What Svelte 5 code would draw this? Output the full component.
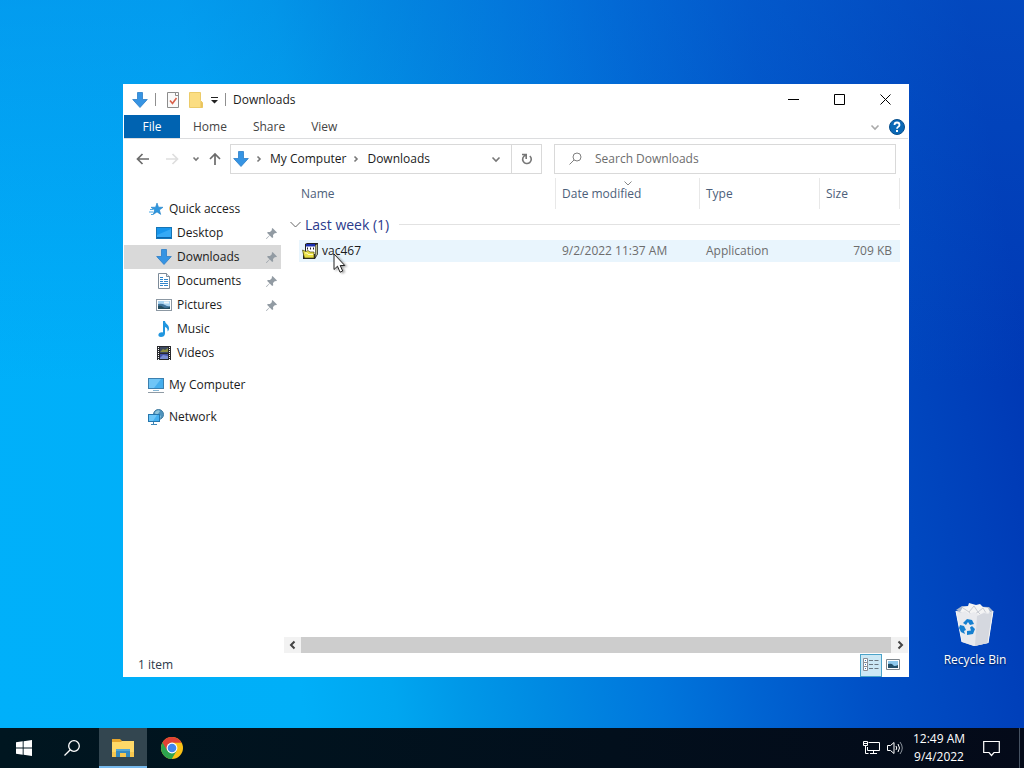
<script lang="ts">
  type NavItem = { name: string; icon: string; child?: boolean; pinned?: boolean; gap?: boolean };

  const places: NavItem[] = [
    { name: 'Quick access', icon: 'star' },
    { name: 'Desktop', icon: 'desktop', child: true, pinned: true },
    { name: 'Downloads', icon: 'arrow', child: true, pinned: true },
    { name: 'Documents', icon: 'document', child: true, pinned: true },
    { name: 'Pictures', icon: 'picture', child: true, pinned: true },
    { name: 'Music', icon: 'music', child: true },
    { name: 'Videos', icon: 'video', child: true },
    { name: 'My Computer', icon: 'computer', gap: true },
    { name: 'Network', icon: 'network', gap: true },
  ];

  const files = [
    { name: 'vac467', modified: '9/2/2022 11:37 AM', type: 'Application', size: '709 KB' },
  ];

  let current = $state('Downloads');
  let view = $state('details');
  let query = $state('');
</script>

{#snippet icon(name: string)}
  <svg class="icon" width="16" height="16" viewBox="0 0 16 16" aria-hidden="true">
    {#if name === 'arrow'}
      <path d="M5.500.5h5v7h4.800L8 15.500.7 7.500h4.800z" fill="#3694e3" stroke="#2b7ec8" stroke-width=".8" />
    {:else if name === 'star'}
      <path d="M9 2l1.500 4.200 4.500.1-3.600 2.700 1.300 4.400L9 10.900l-3.800 2.600 1.400-4.400L3 6.300l4.600-.1z" fill="#2f97df" stroke="#1f7fc6" stroke-width=".6" />
      <path d="M2 8.500h3M1 11h4M3 13.500h2" stroke="#4aa9e6" />
    {:else if name === 'desktop'}
      <rect x=".5" y="2.500" width="15" height="11" fill="#1795ec" stroke="#1675b5" />
      <path d="M1 10L15 4v9H1z" fill="#35a9f5" />
      <path d="M1 12.500h14" stroke="#0b65ae" />
    {:else if name === 'document'}
      <path d="M2.500.5h8l3 3v12h-11z" fill="#fff" stroke="#7d8b99" />
      <path d="M10.500.5v3h3" fill="#e3e8ed" stroke="#7d8b99" />
      <path d="M4 4.500h3M4 6.500h3M8 6.500h4M4 8.500h3M8 8.500h4M4 10.500h8M4 12.500h3M8 12.500h4" stroke="#2f86cc" stroke-width="1.200" />
    {:else if name === 'picture'}
      <rect x=".5" y="2.500" width="15" height="11" fill="#fff" stroke="#8c98a3" />
      <path d="M2 4h12v8H2z" fill="#a9d3f0" />
      <path d="M2 7q4-1 7 1t5 1v3H2z" fill="#41759c" />
      <path d="M2 9q3-1 5 1t7 0v2H2z" fill="#244d5f" />
      <path d="M8 5.500h5" stroke="#eef6fb" stroke-width="2" />
    {:else if name === 'music'}
      <path d="M7 0h2c.2 3 4.500 3.500 4 8-.1 1.200-.8 2-1.500 2.500C12.200 8 10.500 6.500 9 6v6.500C9 15 7 16 5 16s-3-1.300-2.500-2.700C3 11.800 5 11 7 11.500z" fill="#2196df" />
    {:else if name === 'video'}
      <path d="M1 1h14v14H1z" fill="#28292d" />
      <path d="M4 2h8v6H4z" fill="#3d4960" />
      <path d="M4 9h8v5H4z" fill="#4351a7" />
      <path d="M4 7l3-3 2 1 3-2v4z" fill="#8b8e3f" />
      <path d="M4 13l3-3 5 1v3H4z" fill="#7a8ed2" />
      <path d="M2.500 2v13M13.500 2v13" stroke="#fff" stroke-dasharray="1 1" />
    {:else if name === 'computer'}
      <rect x=".5" y="1.500" width="15" height="10" fill="#45aeed" stroke="#3c7fae" />
      <path d="M1 2h12L6 11H1z" fill="#6fc5f6" />
      <path d="M5 13.500h6" stroke="#85b7d5" />
      <path d="M0 15.500h16" stroke="#8f9ba5" />
    {:else if name === 'network'}
      <circle cx="10.500" cy="5.500" r="5" fill="#4f93bd" stroke="#417b9f" />
      <path d="M7 3q3-3 5-1l-2 3 3 2-1 3-4-2z" fill="#8fc4da" />
      <rect x=".5" y="5.500" width="11" height="7" fill="#45b0f0" stroke="#2676ad" />
      <path d="M1 6h8l-4 6H1z" fill="#6cc6f8" />
      <path d="M5.500 13v2M3 15.500h6" stroke="#3e86b6" />
    {:else if name === 'check'}
      <path d="M2.500.5h11v15h-11z" fill="#fafafa" stroke="#8c8c8c" />
      <path d="M10.500.5v3h3" fill="#fff" stroke="#8c8c8c" />
      <path d="M5 8.500l2.500 3L11.500 6" fill="none" stroke="#d9614b" stroke-width="1.600" />
    {:else if name === 'folder'}
      <path d="M1.500.5h11v8l2 2v5h-13z" fill="#fbdd82" stroke="#eccb69" />
      <path d="M12.500 9l2 2v4.500h-2z" fill="#eac45d" />
    {:else if name === 'installer'}
      <path d="M3 1l2-1h11v11l-3 5H1V9h2z" fill="#222" />
      <path d="M4 2h9v9H4z" fill="#fff" />
      <path d="M4 1h9v2.500H4z" fill="#1a2fb0" />
      <path d="M5 5.500h1M8 5.500h1M11 5.500h1" stroke="#222" stroke-width="2" />
      <path d="M13.500 2.500L15.300 1v10l-1.800 3z" fill="#b8bb8a" />
      <path d="M.5 7l3.500 1.500 2-1 2 1.500h4v6H2.500l-1-3.500z" fill="#e9df45" stroke="#4b4814" stroke-width=".7" />
      <path d="M3 10h2l1 1.500h5" fill="none" stroke="#fffbc0" />
    {/if}
  </svg>
{/snippet}

{#snippet chevron(direction: string)}
  <svg class="chevron {direction}" width="10" height="10" viewBox="0 0 10 10" aria-hidden="true">
    <path d="M1.500 3.500L5 7 8.500 3.500" />
  </svg>
{/snippet}

<div class="screen">
  <main class="desktop">
    <section class="window" aria-label="Downloads">
      <header class="titlebar">
        {@render icon('arrow')}
        <span class="separator"></span>
        <div class="quick-tools">
          <button class="plain" aria-label="Properties">{@render icon('check')}</button>
          <button class="plain" aria-label="New folder">{@render icon('folder')}</button>
          <button class="plain" aria-label="Customize toolbar">
            <svg width="7" height="8" viewBox="0 0 7 8"><path d="M0 1h7v1H0zM0 4h7L3.500 7.500z" fill="#222" /></svg>
          </button>
        </div>
        <span class="separator"></span>
        <h1>Downloads</h1>
        <div class="caption">
          <button aria-label="Minimize">
            <svg width="11" height="11" viewBox="0 0 11 11"><path d="M0 5.500h11" /></svg>
          </button>
          <button aria-label="Maximize">
            <svg width="11" height="11" viewBox="0 0 11 11"><path d="M.5.5h10v10H.5z" /></svg>
          </button>
          <button aria-label="Close">
            <svg width="11" height="11" viewBox="0 0 11 11"><path d="M.5.5l10 10M10.500.5l-10 10" /></svg>
          </button>
        </div>
      </header>

      <div class="ribbon">
        <button class="file">File</button>
        <button>Home</button>
        <button>Share</button>
        <button>View</button>
        <div class="ribbon-end">
          <button class="plain light" aria-label="Expand the ribbon">{@render chevron('down')}</button>
          <button class="plain" aria-label="Help">
            <svg width="16" height="16" viewBox="0 0 16 16">
              <circle cx="8" cy="8" r="7.500" fill="#0b69b7" stroke="#084f8c" />
              <path d="M5.500 6q0-2.500 2.500-2.500T10.500 6q0 1-1.200 1.700T8 9.800" fill="none" stroke="#fff" stroke-width="1.800" />
              <path d="M7 11h2v2H7z" fill="#fff" />
            </svg>
          </button>
        </div>
      </div>

      <div class="toolbar">
        <div class="history">
          <button class="plain" aria-label="Back">
            <svg class="nav-arrow" width="14" height="14" viewBox="0 0 14 14"><path d="M13 7H2M6.500 2L1.500 7l5 5" /></svg>
          </button>
          <button class="plain" aria-label="Forward" disabled>
            <svg class="nav-arrow faint" width="14" height="14" viewBox="0 0 14 14"><path d="M1 7h11M7.500 2l5 5-5 5" /></svg>
          </button>
          <button class="plain recent" aria-label="Recent locations">
            <svg class="chevron" width="8" height="8" viewBox="0 0 8 8"><path d="M1.500 2.500L4 5l2.500-2.500" /></svg>
          </button>
          <button class="plain" aria-label="Up">
            <svg class="nav-arrow" width="14" height="14" viewBox="0 0 14 14"><path d="M7 13V2M2 7l5-5 5 5" /></svg>
          </button>
        </div>
        <div class="address">
          {@render icon('arrow')}
          <svg class="step" width="8" height="8" viewBox="0 0 8 8" aria-hidden="true"><path d="M2.500 1.500L5 4 2.500 6.500" /></svg>
          <button class="crumb">My Computer</button>
          <svg class="step" width="8" height="8" viewBox="0 0 8 8" aria-hidden="true"><path d="M2.500 1.500L5 4 2.500 6.500" /></svg>
          <button class="crumb">Downloads</button>
          <button class="plain previous" aria-label="Previous locations">{@render chevron('down')}</button>
          <button class="refresh" aria-label="Refresh">
            <svg width="12" height="12" viewBox="0 0 12 12">
              <path d="M1 1.500h4.200V6M4.500 2.200A4.300 4.300 0 1 0 8.800 3" fill="none" stroke="#777" stroke-width="1.600" />
            </svg>
          </button>
        </div>
        <label class="search">
          <svg width="13" height="13" viewBox="0 0 13 13" aria-hidden="true">
            <circle cx="8" cy="5" r="4" /><path d="M5 8L.5 12.500" />
          </svg>
          <input type="text" aria-label="Search Downloads" placeholder="Search Downloads" bind:value={query} />
        </label>
      </div>

      <div class="body">
        <nav class="places" aria-label="Places">
          {#each places as place}
            <button
              class="place"
              class:child={place.child}
              class:gap={place.gap}
              class:selected={current === place.name}
              onclick={() => (current = place.name)}
            >
              {@render icon(place.icon)}
              <span>{place.name}</span>
              {#if place.pinned}
                <svg class="pin" width="11" height="11" viewBox="0 0 11 11" aria-hidden="true">
                  <path d="M6.500 0L11 4.500l-1 .8-1-.3-2 2 .2 2.200-1 .8-2.500-2.500L.8 10.700 0 11l.3-.8 3.200-2.900L1 4.800 2 4l2 .1 2-2-.3-1.200z" fill="#929ba3" />
                </svg>
              {/if}
            </button>
          {/each}
        </nav>

        <div class="content">
          <table>
            <thead>
              <tr>
                <th class="name">Name</th>
                <th class="modified">Date modified <span class="sort">{@render chevron('down')}</span></th>
                <th class="type">Type</th>
                <th class="size">Size</th>
              </tr>
            </thead>
            <tbody>
              <tr>
                <td class="group" colspan="4">
                  <div class="group-title">
                    <svg width="11" height="11" viewBox="0 0 11 11" aria-hidden="true"><path d="M.5 3l5 5 5-5" /></svg>
                    <span>Last week (1)</span>
                  </div>
                </td>
              </tr>
              {#each files as file}
                <tr class="file-row">
                  <td class="name"><div>{@render icon('installer')}<span>{file.name}</span></div></td>
                  <td>{file.modified}</td>
                  <td>{file.type}</td>
                  <td class="amount">{file.size}</td>
                </tr>
              {/each}
            </tbody>
          </table>
          <div class="scrollbar">
            <button aria-label="Scroll left">{@render chevron('left')}</button>
            <div class="thumb"></div>
            <button aria-label="Scroll right">{@render chevron('right')}</button>
          </div>
        </div>
      </div>

      <footer class="status">
        <span>{files.length} item</span>
        <div class="views">
          <button class:active={view === 'details'} aria-label="Details" onclick={() => (view = 'details')}>
            <svg width="16" height="14" viewBox="0 0 16 14">
              <path d="M.5.5h4v4h-4zM.5 4.500h4v4h-4zM.5 8.500h4v4h-4z" fill="#fff" stroke="#8b8d94" />
              <path d="M2 2.500h1M2 6.500h1M2 10.500h1" stroke="#3b79b4" />
              <path d="M6 2.500h4M11.500 2.500h4M6 6.500h4M11.500 6.500h4M6 10.500h4M11.500 10.500h4" stroke="#6b7780" />
            </svg>
          </button>
          <button class:active={view === 'large'} aria-label="Large icons" onclick={() => (view = 'large')}>
            <svg width="14" height="12" viewBox="0 0 14 12">
              <path d="M.5.5h13v10H.5z" fill="#fff" stroke="#7e868d" />
              <path d="M2 2h10v7H2z" fill="#8ec8ec" />
              <path d="M2 5q4-1 5 1t5 0v3H2z" fill="#244f68" />
            </svg>
          </button>
        </div>
      </footer>
    </section>

    <button class="shortcut">
      <svg width="40" height="44" viewBox="0 0 40 44" aria-hidden="true">
        <path d="M1 8l37 1-5 31-14 3-12-4z" fill="#cfd5df" />
        <path d="M1 7l6-4 27 1 4 4-5 4-15 2z" fill="#aab7cc" />
        <path d="M5 9l3-5 5-1 1-3 7 2 4-1 3 3 5 1 2 4-5 4-12 1z" fill="#f4f4f4" />
        <path d="M8 5l6 4 5-6 4 6 5-4 3 5M14 9l3 4 6-4 4 4" fill="none" stroke="#c8cbd2" />
        <path d="M1 8l5 2 4-2 4 3 5-2 5 3 5-3 4 1 5-2-5 32-14 3-12-4z" fill="#e9eaee" />
        <path d="M22 13l7-3 4 1 5-3-5 32-13 3z" fill="#d5d8df" />
        <path d="M1 8l6 31M38 8l-5 32" fill="none" stroke="#f8f8f8" />
        <g fill="#1680d0">
          <path d="M8 20l4-4 5 1 2 4-4 1-2-3-2 3z" />
          <path d="M5 22l4 1 2 4-2 1 1 3-4-2-2-4z" />
          <path d="M17 23l3 3-2 5-6 1v-4l4-.5-1-3z" />
        </g>
      </svg>
      <span>Recycle Bin</span>
    </button>

    <svg class="pointer" width="14" height="21" viewBox="0 0 14 21" aria-hidden="true">
      <path d="M1 1v15.500l3.500-3.300 2.500 6 2.700-1.200-2.500-5.500h4.600z" fill="#fff" stroke="#222" />
    </svg>
  </main>

  <footer class="taskbar">
    <div class="apps">
      <button aria-label="Start">
        <svg width="16" height="16" viewBox="0 0 16 16"><path d="M0 2.200L6.700 1.300V7.600H0zM7.600 1.200L16 0v7.600H7.600zM0 8.500h6.700v6.200L0 13.800zM7.600 8.500H16V16l-8.400-1.200z" fill="#fff" /></svg>
      </button>
      <button aria-label="Search">
        <svg width="16" height="16" viewBox="0 0 16 16" fill="none" stroke="#fff" stroke-width="1.300"><circle cx="10" cy="6" r="5.300" /><path d="M6.300 9.800L.5 15.500" /></svg>
      </button>
    </div>
    <div class="apps running">
      <button class="active" aria-label="File Explorer">
        <svg width="22" height="20" viewBox="0 0 22 20">
          <path d="M0 1h8l2 2h11v16H0z" fill="#e6a52c" />
          <path d="M0 4h9l1-1h12v16H0z" fill="#ffd968" />
          <path d="M0 14h22v5H0z" fill="#f8c84f" />
          <path d="M4 11h14v8h-4v-4H8v4H4z" fill="#368bc1" />
          <path d="M4 11h14v2H4z" fill="#55a7d4" />
        </svg>
      </button>
      <button aria-label="Google Chrome">
        <svg width="22" height="22" viewBox="0 0 22 22">
          <circle cx="11" cy="11" r="11" fill="#fbc116" />
          <path d="M11 11L1.500 5.500A11 11 0 0 0 10.800 22L15.800 13.500z" fill="#2da44f" />
          <path d="M1.500 5.500A11 11 0 0 1 20.600 5.800H11L6.300 13.700z" fill="#e14135" />
          <circle cx="11" cy="11" r="5.400" fill="#fff" />
          <circle cx="11" cy="11" r="4.300" fill="#4285ed" />
        </svg>
      </button>
    </div>
    <div class="tray">
      <button aria-label="Network status">
        <svg width="17" height="14" viewBox="0 0 17 14" fill="none" stroke="#fff"><path d="M5.500 1.500h11v8h-12V6M.5.5h4v4h-4zM2.500 4.500v8h3M10.500 9.500v3M7 12.500h7M1 2.500h3" /></svg>
      </button>
      <button aria-label="Volume">
        <svg width="17" height="14" viewBox="0 0 17 14" fill="none" stroke="#fff"><path d="M.5 4.500h3l3.500-3v11l-3.500-3h-3zM9 5q1.500 2 0 4M11 3q3 4 0 8" /><path d="M13 1q4.500 6 0 12" stroke="#8a929b" /></svg>
      </button>
      <button class="clock"><span>12:49 AM</span><span>9/4/2022</span></button>
      <button class="notify" aria-label="Notifications">
        <svg width="17" height="17" viewBox="0 0 17 17" fill="none" stroke="#fff" stroke-width="1.200"><path d="M.7 1.500h15.600v11H11l-2.500 3-2.500-3H.7z" /></svg>
      </button>
      <button class="peek" aria-label="Show desktop"></button>
    </div>
  </footer>
</div>

<style>
  :global(body) {
    margin: 0;
  }

  .screen {
    display: flex;
    flex-direction: column;
    min-height: 100vh;
    font-family: "Open Sans", "Noto Sans", sans-serif;
    font-size: 12px;
    line-height: 16px;
    color: #1b1b1b;
    background:
      linear-gradient(180deg, rgba(10, 110, 215, 0.3), rgba(0, 140, 230, 0) 50%),
      linear-gradient(80deg, #00b0fa 0%, #00aff8 27%, #00a6f0 35%, #0098e8 41%, #008ae2 48%, #0076dc 58%, #0064d2 66%, #0050c6 76%, #0038b4 95%);
  }

  button {
    margin: 0;
    padding: 0;
    border: none;
    background: none;
    color: inherit;
    font: inherit;
    cursor: default;
  }

  svg {
    display: block;
    flex: none;
  }

  .plain {
    display: flex;
    align-items: center;
    justify-content: center;
  }

  .chevron path,
  .step path {
    fill: none;
    stroke: #777;
    stroke-width: 1.6;
  }

  .chevron.right {
    transform: rotate(-90deg);
  }

  .chevron.left {
    transform: rotate(90deg);
  }

  .desktop {
    flex: 1;
    position: relative;
  }

  /* Explorer window */
  .window {
    position: absolute;
    top: 84px;
    right: 115px;
    bottom: 51px;
    left: 123px;
    display: flex;
    flex-direction: column;
    box-sizing: border-box;
    padding: 0 1px;
    background: #fff;
  }

  .titlebar {
    display: flex;
    align-items: center;
    gap: 7px;
    height: 31px;
    padding-left: 8px;
  }

  .quick-tools {
    display: flex;
    gap: 7px;
    padding-left: 2px;
  }

  .separator {
    width: 1px;
    height: 13px;
    background: #8f8f8f;
  }

  h1 {
    margin: 0;
    font-size: 12px;
    font-weight: 400;
  }

  .caption {
    display: flex;
    margin-left: auto;
    align-self: stretch;
  }

  .caption button {
    display: flex;
    align-items: center;
    justify-content: center;
    width: 46px;
  }

  .caption path {
    fill: none;
    stroke: #000;
  }

  .ribbon {
    display: flex;
    height: 23px;
    border-bottom: 1px solid #dcdddf;
    color: #444;
  }

  .ribbon > button {
    padding: 0 13px;
  }

  .ribbon > .file {
    width: 56px;
    background: #0063b1;
    color: #fff;
  }

  .ribbon-end {
    display: flex;
    align-items: center;
    gap: 9px;
    margin-left: auto;
    padding-right: 3px;
  }

  .light .chevron path {
    stroke: #aaa;
  }

  .toolbar {
    display: flex;
    align-items: center;
    height: 39px;
    padding-right: 12px;
  }

  .history {
    display: flex;
    align-items: center;
    gap: 15px;
    box-sizing: border-box;
    width: 106px;
    padding-left: 12px;
  }

  .history .recent {
    margin: 0 -7px 0 -2px;
  }

  .nav-arrow path {
    fill: none;
    stroke: #6b6b6b;
    stroke-width: 1.7;
  }

  .nav-arrow.faint path {
    stroke: #dedede;
  }

  .address,
  .search {
    display: flex;
    align-items: center;
    box-sizing: border-box;
    height: 30px;
    border: 1px solid #d9d9d9;
  }

  .address {
    flex: 1 1 312px;
    margin-right: 12px;
    padding-left: 2px;
  }

  .step {
    margin: 0 7px 0 6px;
  }

  .crumb {
    white-space: nowrap;
  }

  .previous {
    width: 30px;
    margin-left: auto;
  }

  .refresh {
    display: flex;
    align-items: center;
    justify-content: center;
    align-self: stretch;
    width: 30px;
    border-left: 1px solid #d9d9d9;
  }

  .search {
    flex: 1 1 342px;
    gap: 13px;
    padding: 0 14px;
  }

  .search svg {
    fill: none;
    stroke: #808080;
  }

  .search input {
    flex: 1;
    min-width: 0;
    padding: 0;
    border: none;
    outline: none;
    background: none;
    color: #1b1b1b;
    font: inherit;
  }

  .search input::placeholder {
    color: #6d6d6d;
    opacity: 1;
  }

  .body {
    display: flex;
    flex: 1;
    min-height: 0;
  }

  .places {
    width: 157px;
    padding: 19px 3px 0 0;
  }

  .place {
    display: flex;
    align-items: center;
    gap: 5px;
    box-sizing: border-box;
    width: 100%;
    height: 24px;
    padding: 0 4px 0 24px;
  }

  .place.child {
    padding-left: 32px;
  }

  .place.gap {
    margin-top: 8px;
  }

  .place.selected {
    background: #d9d9d9;
  }

  .pin {
    margin-left: auto;
  }

  .content {
    display: flex;
    flex: 1;
    flex-direction: column;
    min-width: 0;
  }

  table {
    width: calc(100% - 8px);
    table-layout: fixed;
    border-collapse: separate;
    border-spacing: 0;
    color: #6d6d6d;
  }

  th {
    position: relative;
    box-sizing: border-box;
    height: 31px;
    padding: 0 6px;
    border-right: 1px solid #e8e8e8;
    color: #4c607a;
    font-weight: 400;
    text-align: left;
  }

  th.name {
    padding-left: 17px;
  }

  th.modified {
    width: 144px;
  }

  th.type {
    width: 120px;
  }

  th.size {
    width: 80px;
  }

  .sort {
    position: absolute;
    top: 0;
    left: 50%;
    margin-left: -5px;
  }

  .sort .chevron path {
    stroke: #888;
    stroke-width: 1;
  }

  td {
    height: 22px;
    padding: 0 6px;
  }

  td.group {
    height: 31px;
    padding: 0 0 0 6px;
  }

  .group-title {
    display: flex;
    align-items: center;
    gap: 4px;
    color: #2b3a8c;
    font-size: 14px;
    line-height: 20px;
  }

  .group-title path {
    fill: none;
    stroke: #666;
  }

  .group-title::after {
    content: "";
    flex: 1;
    height: 1px;
    margin-left: 6px;
    background: #e2e2e2;
  }

  .file-row td {
    background: #e9f5fd;
  }

  .file-row td.name {
    padding: 0 0 0 15px;
    background: none;
  }

  .file-row .name div {
    display: flex;
    align-items: center;
    gap: 4px;
    height: 22px;
    padding-left: 3px;
    background: #e9f5fd;
    color: #1b1b1b;
  }

  .file-row td.amount {
    padding-right: 8px;
    text-align: right;
  }

  .scrollbar {
    display: flex;
    height: 16px;
    margin-top: auto;
    background: #f2f2f2;
  }

  .scrollbar button {
    display: flex;
    align-items: center;
    justify-content: center;
    width: 17px;
  }

  .scrollbar .chevron path {
    stroke: #444;
    stroke-width: 2;
  }

  .thumb {
    flex: 1;
    background: #cdcdcd;
  }

  .status {
    display: flex;
    align-items: center;
    justify-content: space-between;
    height: 24px;
    padding: 0 4px 0 14px;
    color: #2c3a4b;
  }

  .views {
    display: flex;
  }

  .views button {
    display: flex;
    align-items: center;
    justify-content: center;
    box-sizing: border-box;
    width: 22px;
    height: 23px;
  }

  .views .active {
    border: 1px solid #4ba3c9;
    background: #cce8f5;
  }

  .shortcut {
    position: absolute;
    right: 11px;
    bottom: 60px;
    display: flex;
    flex-direction: column;
    align-items: center;
    gap: 5px;
    width: 76px;
    color: #fff;
    white-space: nowrap;
    text-shadow: 0 1px 2px rgba(0, 0, 0, 0.6);
  }

  .pointer {
    position: absolute;
    top: 253px;
    left: 333px;
    filter: drop-shadow(2px 1px 1px rgba(0, 0, 0, 0.35));
  }

  /* Taskbar */
  .taskbar {
    display: flex;
    height: 40px;
    background: linear-gradient(90deg, #001620, #020f1c 60%, #040a19);
    color: #fff;
  }

  .apps {
    display: flex;
  }

  .apps button {
    display: flex;
    align-items: center;
    justify-content: center;
    box-sizing: border-box;
    width: 48px;
  }

  .apps.running {
    gap: 1px;
    margin-left: 3px;
  }

  .apps .active {
    padding-top: 2px;
    border-bottom: 2px solid #76b9ed;
    background: #334650;
  }

  .tray {
    display: flex;
    align-items: center;
    gap: 7px;
    margin-left: auto;
  }

  .tray .clock {
    display: flex;
    flex-direction: column;
    align-items: center;
    width: 56px;
    margin-right: 9px;
    line-height: 18px;
  }

  .tray .notify {
    margin-right: 12px;
  }

  .tray .peek {
    align-self: stretch;
    width: 5px;
    border-left: 1px solid #465262;
  }
</style>
